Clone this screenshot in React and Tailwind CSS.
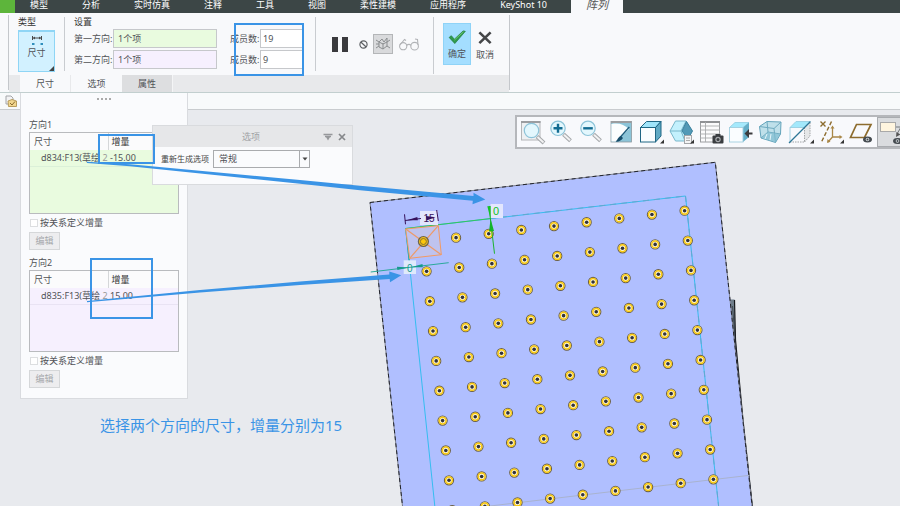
import React from "react";

const MENU = ["模型", "分析", "实时仿真", "注释", "工具", "视图", "柔性建模", "应用程序", "KeyShot 10"];

const COLUMNS = [0, 1, 2, 3, 4, 5, 6, 7, 8];
const ROWS = [0, 1, 2, 3, 4, 5, 6, 7, 8, 9];

function Hole({ x, y }) {
  return (
    <g>
      <circle cx={x} cy={y} r="4.6" fill="#fdf6da" stroke="#6b5f45" strokeWidth="1.1" />
      <circle cx={x} cy={y} r="3.4" fill="none" stroke="#f9c90f" strokeWidth="1.5" />
      <circle cx={x} cy={y} r="1.8" fill="#33343c" />
    </g>
  );
}

function Model() {
  const holes = ROWS.flatMap((row) =>
    COLUMNS.filter((col) => row + col > 0).map((col) => ({
      id: `${row}-${col}`,
      x: 423.4 + col * 32.65 + row * 3.2,
      y: 241.5 - col * 3.85 + row * 29.85,
    }))
  );
  return (
    <svg className="absolute inset-0 h-full w-full" aria-label="阵列预览">
      <polygon points="729,299.5 734.5,299.5 735.5,340 743,420 753,508 750,508" fill="#6f7e8b" />
      <path d="M734.5 300 L735.5 340 L743 420 L752.5 508" stroke="#16181c" strokeWidth="1.2" fill="none" />
      <path d="M732.5 306 L736 350" stroke="#2c333a" strokeWidth="0.7" fill="none" />
      <polygon points="370,202.5 715.3,162.3 752.3,508 402.7,508" fill="#b0bfff" stroke="#7d8190" strokeWidth="1" />
      <polygon points="370,202.5 715.3,162.3 752.3,508 402.7,508" fill="none" stroke="#22242c" strokeWidth="1" strokeDasharray="4 3" />
      <path d="M749.5 475.3 L490 506" stroke="#a9b3cf" strokeWidth="1" />
      <path d="M435 508 L405.7 228.5 L685.5 196 L718.8 508" fill="none" stroke="#35bdf0" strokeWidth="1" />
      <path d="M685.5 196 L718.8 508 M490 218.5 L685.5 196" fill="none" stroke="#63a9cf" strokeWidth="1" strokeDasharray="6 5" />
      <path d="M405.7 228.5 L491 218.5" stroke="#35c45c" strokeWidth="1.2" />
      <path d="M405.7 228.5 L410 268" stroke="#2aa99b" strokeWidth="1.2" />
      <polygon points="405.7,229 438.3,225.7 441.3,254.7 409.7,258.3" fill="#bfc3ee" stroke="#f39a62" strokeWidth="1" />
      <path d="M405.7 229 L441.3 254.7 M438.3 225.7 L409.7 258.3" stroke="#ee9a68" strokeWidth="1.2" />
      <circle cx="423.4" cy="241.5" r="5" fill="#f5c01c" stroke="#6b6350" strokeWidth="1.2" />
      <circle cx="423.4" cy="241.5" r="3" fill="#fcc70c" stroke="#8a742c" strokeWidth="1" />
      {holes.map((h) => (
        <Hole key={h.id} x={h.x} y={h.y} />
      ))}
      <rect x="420" y="211" width="18" height="14" fill="#e3e6fd" />
      <path d="M404.5 214.3 L405.5 224.3 M436.7 210 L438.3 221 M405 220.5 L421 218.5" stroke="#36115c" strokeWidth="1" />
      <polygon points="407,220.3 417.3,217 417.8,220.3" fill="#36115c" />
      <polygon points="435.5,217.3 426,216 426.5,220.5" fill="#36115c" />
      <text x="423.5" y="222" fontSize="10" fill="#36115c" className="font-['Liberation_Sans',sans-serif]">15</text>
      <rect x="490.5" y="204" width="12.5" height="14" fill="#e3e6fd" />
      <path d="M489.5 206 L490.3 218 L494.5 253.7" stroke="#1db32e" strokeWidth="1" fill="none" />
      <polygon points="487.3,206.3 490.7,206 490.3,218.3" fill="#14c225" />
      <polygon points="490.6,219 489,231.5 494,231" fill="#14b42a" />
      <text x="493" y="215" fontSize="11" fill="#14c225" className="font-['Liberation_Sans',sans-serif]">0</text>
      <rect x="403.7" y="260.3" width="12.3" height="13.7" fill="#dfeafb" />
      <path d="M370.7 272 L448.7 262.7" stroke="#2aa99b" strokeWidth="1" />
      <polygon points="397,266.7 397.4,270 408.5,267.4" fill="#169a8c" />
      <polygon points="422.5,264 422.8,267.3 411,267.2" fill="#169a8c" />
      <text x="407" y="271.5" fontSize="10" fill="#169a8c" className="font-['Liberation_Sans',sans-serif]">0</text>
    </svg>
  );
}

function Annotations() {
  return (
    <svg className="pointer-events-none absolute inset-0 h-full w-full" aria-hidden="true">
      <g fill="#3a94e6">
        <polygon points="87,161.7 130,164.3 300,180 360,185.7 473.5,196 473.5,192.8 485.3,199.5 472.5,204.3 472.8,200.8 360,190.2 300,183.8 130,166.3 87,163" />
        <polygon points="87,301 200,290 300,281.5 389.3,274.5 389.3,271.5 401.3,275.3 390,282.3 389.7,279 300,285 200,292.6 87,302.2" />
      </g>
    </svg>
  );
}

function Corner() {
  return <polygon points="27,22.5 27,26.5 23,26.5" fill="#333" />;
}

function Eye({ x, y }) {
  return (
    <g>
      <ellipse cx={x} cy={y} rx="4.5" ry="3" fill="#454b50" />
      <circle cx={x} cy={y} r="1.8" fill="#d5dadd" />
      <circle cx={x} cy={y} r="1" fill="#454b50" />
    </g>
  );
}

function Lens({ cx, cy }) {
  return (
    <g>
      <path d={`M${cx + 5.5} ${cy + 6} L${cx + 12.5} ${cy + 12.5}`} stroke="#a4a7aa" strokeWidth="4" />
      <path d={`M${cx + 6} ${cy + 6.5} L${cx + 12} ${cy + 12}`} stroke="#f2f2f3" strokeWidth="2" />
      <circle cx={cx} cy={cy} r="7.2" fill="#e3f7fd" stroke="#8cc3d8" strokeWidth="1.2" />
    </g>
  );
}

const VIEW_TOOLS = [
  {
    name: "重新调整",
    art: (
      <>
        <rect x="4.5" y="4.5" width="18.5" height="18.5" fill="#eef0f2" stroke="#b4b6b8" />
        <path d="M4 5h19.5" stroke="#9b9da0" strokeWidth="2" />
        <Lens cx={14.5} cy={13.5} />
      </>
    ),
  },
  {
    name: "放大",
    art: (
      <>
        <Lens cx={11} cy={11.3} />
        <path d="M6.5 11.3h9M11 6.8v9" stroke="#136c92" strokeWidth="2.4" />
      </>
    ),
  },
  {
    name: "缩小",
    art: (
      <>
        <Lens cx={11} cy={11.3} />
        <path d="M6.2 11.3h9.6" stroke="#136c92" strokeWidth="2.4" />
      </>
    ),
  },
  {
    name: "重画",
    art: (
      <>
        <rect x="4" y="4.5" width="20.5" height="20.5" fill="#8cc4d8" stroke="#8d9aa0" strokeWidth="0.8" />
        <path d="M4.4 7 C12 5.5 17 7.5 22 12 L9 24.6 L4.4 24.6Z" fill="#fbfdfe" />
        <path d="M4 5h20.5" stroke="#9b9da0" strokeWidth="2" />
        <path d="M22.3 10 L13 20.5" stroke="#1c5b7c" strokeWidth="1.3" />
        <path d="M14 19 L16 21 C14 24 11 25 8.5 24.6 C10.5 23 11 20 14 19Z" fill="#174d6b" />
      </>
    ),
  },
  {
    name: "显示样式",
    art: (
      <>
        <path d="M3.5 10.5 L9.5 4.5 H24 L18.5 10.5Z" fill="#9fe4fa" stroke="#1f6684" />
        <path d="M18.5 10.5 L24 4.5 V19 L18.5 25Z" fill="#5fa9c4" stroke="#1f6684" />
        <rect x="3.5" y="10.5" width="15" height="14.5" fill="#f9fdff" stroke="#1f6684" />
        <Corner />
      </>
    ),
  },
  {
    name: "已保存方向",
    art: (
      <>
        <path d="M3 14 L8.5 4 H19 L24.5 14 L19 24 H8.5Z" fill="#c3f1fd" stroke="#78b7cb" />
        <path d="M3 14 H14 M14 14 L19 4 M14 14 L18 24" stroke="#78b7cb" fill="none" />
        <path d="M19.5 4.5 L25.5 14 L21 22 L15 14Z" fill="#5299b6" stroke="#3a819e" />
        <rect x="17.5" y="18.5" width="7" height="8" fill="#f4f4f5" stroke="#a3a5a8" />
        <path d="M19 21h4M19 23.5h4" stroke="#999" strokeWidth="0.8" />
        <Corner />
      </>
    ),
  },
  {
    name: "视图管理器",
    art: (
      <>
        <rect x="3.5" y="4.5" width="19" height="20.5" fill="#fbfbfc" stroke="#9b9da0" />
        <path d="M3 5h20" stroke="#8f9194" strokeWidth="2" />
        <path d="M3 9h20M3 13h20M3 17h20M3 21h20M8.5 5v20" stroke="#a8aaad" strokeWidth="0.9" />
        <rect x="15.5" y="18.5" width="11" height="8" rx="1" fill="#3a3d40" />
        <rect x="18.5" y="17" width="5" height="2.5" fill="#3a3d40" />
        <circle cx="21" cy="22.5" r="2.7" fill="#a9acaf" />
        <circle cx="21" cy="22.5" r="1.5" fill="#3a3d40" />
      </>
    ),
  },
  {
    name: "外观",
    art: (
      <>
        <path d="M2.5 10.5 L8 5.5 H22 L16 10.5Z" fill="#a5e9fc" stroke="#8fcbe0" strokeWidth="0.8" />
        <path d="M16 10.5 L22 5.5 V20 L16 25Z" fill="#64aec8" />
        <rect x="2.5" y="10.5" width="13.5" height="14.5" fill="#fafdff" stroke="#a2cfdf" strokeWidth="0.9" />
        <path d="M17.5 16.5 L22 12 V15.5 H25.5 V17.5 H22 V21Z" fill="#3a3a3c" />
      </>
    ),
  },
  {
    name: "透视图",
    art: (
      <>
        <path d="M2.5 9.5 L10 4.5 L24 5 L23.5 17 L18.5 25.5 L4 21Z" fill="#bfe0ea" stroke="#64a4bb" />
        <path d="M2.5 9.5 L17 11.5 L24 5 M17 11.5 L18.5 25.5 M10 4.5 L11 15 L4 21 M11 15 L23.5 17" stroke="#6faabf" fill="none" />
        <path d="M11 15 L23 17 L18.5 25 L4.5 21Z" fill="#7fbcd0" opacity="0.7" />
        <path d="M10 17 L8 22 M14 17 L13 23" stroke="#e6f6fb" />
      </>
    ),
  },
  {
    name: "截面",
    art: (
      <>
        <path d="M3 10.5 L9 4.5 H23 L17.5 10.5Z" fill="#a3e8fb" />
        <path d="M3 10.5 H17.5 M3 10.5 V25 M3 10.5 L9 4.5 H23" stroke="#92cadd" strokeWidth="0.8" fill="none" />
        <path d="M17.5 10.5 L23 5 V19 L17.5 25Z" fill="#e5e7e8" />
        <path d="M17.5 10.5 V25 H3 M17.5 25 L23 19 V5" stroke="#a1a4a6" strokeDasharray="1.5 1" fill="none" />
        <path d="M2 26 L23.5 4.5" stroke="#2e7696" strokeWidth="1.2" />
        <Corner />
      </>
    ),
  },
  {
    name: "基准显示过滤器",
    art: (
      <>
        <path d="M3.5 4.5 L8.5 9.5 M8.5 4.5 L3.5 9.5" stroke="#8d6c2e" strokeWidth="1.4" />
        <path d="M14.5 4.5 L4 26" stroke="#8d6c2e" strokeWidth="1.4" strokeDasharray="4 2" />
        <path d="M15.5 11 V20 H24 M15.5 20 L11 25" stroke="#a98747" strokeWidth="1.3" fill="none" />
        <path d="M15.5 8.5 l2 3 h-4z M25.5 20 l-3 -2 v4z M10 26 l0.5 -4 l3 2.8z" fill="#a98747" />
        <Corner />
      </>
    ),
  },
  {
    name: "平面显示",
    art: (
      <>
        <path d="M9.5 7.5 H24 L17.5 20.5 H3.5Z" fill="none" stroke="#8d6c2e" strokeWidth="1.7" />
        <Eye x={20.5} y={22.5} />
      </>
    ),
  },
  {
    name: "注释显示",
    art: (
      <>
        <path d="M17 9 H30 M23 9 L19 16" stroke="#75787b" />
        <path d="M18 19 l0.5 -5 l4 2.5z" fill="#555" />
        <rect x="2.5" y="4.5" width="15" height="9" fill="#fff5df" stroke="#a9a9a9" />
        <Eye x={19.5} y={23} />
      </>
    ),
  },
];

function ViewToolbar() {
  return (
    <div
      role="toolbar"
      aria-label="视图"
      className="absolute top-[115px] right-0 left-[515px] flex overflow-hidden border-y-2 border-l-2 border-[#b5b7bb] bg-[#f8f9fc]"
    >
      {VIEW_TOOLS.map((tool, i) => (
        <button
          key={tool.name}
          type="button"
          aria-label={tool.name}
          className={
            i === VIEW_TOOLS.length - 1
              ? "h-[30px] w-[30px] shrink-0 border border-[#a9acb0] bg-[#dadcdf]"
              : "h-[30px] w-[30px] shrink-0"
          }
        >
          <svg viewBox="0 0 30 30" className="h-[30px] w-[30px]">{tool.art}</svg>
        </button>
      ))}
    </div>
  );
}

function MenuBar() {
  return (
    <nav className="flex h-[13px] bg-[#3c4646] text-white">
      <button type="button" aria-label="文件" className="w-[15px] shrink-0 bg-[#5db53b]" />
      <div className="flex shrink-0 items-start gap-[34px] pr-[24px] pl-[15px]">
        {MENU.map((m) => (
          <button key={m} type="button" className="leading-[9px] whitespace-nowrap">
            {m}
          </button>
        ))}
      </div>
      <button
        type="button"
        className="flex w-[52px] shrink-0 justify-center bg-[#f8f9fb] text-[11px] leading-[9px] text-[#555] italic"
      >
        阵列
      </button>
    </nav>
  );
}

function Divider() {
  return <div className="my-1 w-px shrink-0 bg-[#c9ccd0]" />;
}

function DirectionField({ id, label, value, tint }) {
  return (
    <div className="flex items-center">
      <label htmlFor={id} className="w-[39px] whitespace-nowrap">
        {label}
      </label>
      <input
        id={id}
        defaultValue={value}
        className={`h-[19px] w-[104px] border border-[#c6c8cb] px-[4px] outline-none ${tint}`}
      />
    </div>
  );
}

function CountField({ id, value }) {
  return (
    <div className="flex items-center">
      <label htmlFor={id} className="w-[30px] whitespace-nowrap">
        成员数:
      </label>
      <input id={id} defaultValue={value} className="h-[19px] w-[43px] border border-[#c6c8cb] bg-white px-[2px] outline-none" />
    </div>
  );
}

function RibbonTools() {
  return (
    <div className="flex items-center">
      <button type="button" aria-label="暂停" className="ml-4 flex gap-1">
        <span className="h-[15px] w-[6px] bg-[#3a3a3d]" />
        <span className="h-[15px] w-[6px] bg-[#3a3a3d]" />
      </button>
      <button type="button" aria-label="无预览" className="ml-[11px]">
        <svg viewBox="0 0 10 10" className="h-[9px] w-[9px]">
          <circle cx="5" cy="5" r="4" fill="none" stroke="#5c5f62" strokeWidth="1.3" />
          <path d="M2 2.2 L8 7.8" stroke="#5c5f62" strokeWidth="1.3" />
        </svg>
      </button>
      <button
        type="button"
        aria-label="连接"
        className="ml-[5px] flex h-5 w-5 items-center justify-center border border-[#b4b6b8] bg-[#d9dadc]"
      >
        <svg viewBox="0 0 16 14" className="h-[14px] w-4" fill="none" stroke="#8b8e90" strokeWidth="1">
          <path d="M1 3 L4 5 L7 2 L9 5 L12 1 L12 5 L15 3 M4 5 V10 L8 12 L12 9 V5 M8 6 V12 M4 5 L8 7 L12 5 M1 11 L4 9 M15 11 L12 9 M1 7 H4" />
        </svg>
      </button>
      <button type="button" aria-label="眼镜预览" className="mx-[6px]">
        <svg viewBox="0 0 20 14" className="h-[14px] w-5" fill="none" stroke="#b1b3b6" strokeWidth="1.1">
          <circle cx="4.2" cy="9.2" r="3.6" />
          <circle cx="15.6" cy="9.2" r="3.8" />
          <path d="M7.5 8.5 C9 7 11 7 12 8.5 M1 8 L5.5 2.5 L7 3.5 M19 8 L18.5 2.5 L16 2" />
        </svg>
      </button>
    </div>
  );
}

function Ribbon() {
  return (
    <div className="flex border-b border-[#c2cfcf] bg-[#f8f9fb] pl-2">
      <div className="my-0.5 w-px bg-[#c4c7cb]" />
      <div>
        <div className="flex h-[62px]">
          <section className="px-[9px] pt-[3px]">
            <h2 className="leading-[11px] text-[#333]">类型</h2>
            <button
              type="button"
              className="relative mt-[3px] flex h-[42px] w-[37px] flex-col items-center border border-t-2 border-[#8fd5f5] bg-[#d2f1ff]"
            >
              <svg viewBox="0 0 12 12" className="mt-[3px] h-3 w-3">
                <path d="M1.5 1v4M10.5 1v4M2 3h8" stroke="#4a4a4a" strokeWidth="1" />
                <path d="M2 3l2-1.5v3zM10 3L8 1.500v3z" fill="#4a4a4a" />
                <path d="M1 8h2.500v2H1zM9.500 8H12v2H9.500z" fill="#2f8fbd" />
              </svg>
              <span className="leading-[12px]">尺寸</span>
              <svg viewBox="0 0 5 5" className="absolute right-0 bottom-0 h-[5px] w-[5px]">
                <path d="M5 0V5H0Z" fill="#444" />
              </svg>
            </button>
          </section>
          <Divider />
          <section className="pt-[3px] pr-3 pl-[9px]">
            <h2 className="leading-[11px] text-[#333]">设置</h2>
            <div className="mt-[2px] flex gap-[13px]">
              <div className="flex flex-col gap-[2px]">
                <DirectionField id="dir1" label="第一方向:" value="1个项" tint="bg-[#e9fbdf]" />
                <DirectionField id="dir2" label="第二方向:" value="1个项" tint="bg-[#f6f0fe]" />
              </div>
              <div className="flex flex-col gap-[2px]">
                <CountField id="count1" value="19" />
                <CountField id="count2" value="9" />
              </div>
            </div>
          </section>
          <Divider />
          <RibbonTools />
          <div className="ml-2">
            <div className="mt-1 h-[57px] w-px bg-[#c9ccd0]" />
          </div>
          <div className="flex pt-[10px] pr-[10px] pl-[9px]">
            <button type="button" className="flex h-[42px] w-[28px] flex-col items-center border border-[#8fd3f7] bg-[#a4deff] pt-[6px]">
              <svg viewBox="0 0 20 16" className="h-4 w-5">
                <path d="M1 8.500 L3.500 6.500 L7 10.500 L17 1 L19.500 1.500 L7.500 15.500Z" fill="#2f9a4c" stroke="#1f7a3a" strokeWidth="0.8" />
                <path d="M7 11.500 L17.500 2" stroke="#74cd74" strokeWidth="1" />
              </svg>
              <span className="leading-[20px]">确定</span>
            </button>
            <button type="button" className="flex h-[42px] w-[28px] flex-col items-center pt-[7px]">
              <svg viewBox="0 0 16 16" className="h-4 w-4">
                <path d="M2 2.500 L14 14 M14 2.500 L2 14" stroke="#444648" strokeWidth="2.800" />
              </svg>
              <span className="leading-[20px]">取消</span>
            </button>
          </div>
        </div>
        <div className="flex h-[17px] bg-[#e8e9eb] pl-[11px]">
          <button type="button" className="w-[51px] border-r border-[#e8e9eb] bg-[#f8f9fb]">尺寸</button>
          <button type="button" className="w-[51px] bg-[#f8f9fb]">选项</button>
          <button type="button" className="w-[51px] border-r border-[#f4f5f6] bg-[#dddee0]">属性</button>
        </div>
      </div>
      <div className="my-0.5 w-px bg-[#c4c7cb]" />
    </div>
  );
}

function Direction({ title, name, value, fill, line, checkId }) {
  return (
    <section>
      <h3 className="leading-[14px]">{title}</h3>
      <div className={`h-[82px] border border-[#b9bbbe] ${fill}`}>
        <table className="w-full table-fixed border-collapse text-left">
          <thead>
            <tr className="h-[17px] bg-[#fbfbfc]">
              <th className="w-[78px] border-r border-[#d5d7d9] py-0 pl-1 font-normal">尺寸</th>
              <th className="py-0 pl-[3px] font-normal text-[#333]">增量</th>
            </tr>
          </thead>
          <tbody>
            <tr className={`h-[16px] border-b ${line}`}>
              <td className="py-0 pl-[11px] whitespace-nowrap">
                {name}<span className="text-[#999]"> 2</span>
              </td>
              <td className="py-0 pl-[2px]">{value}</td>
            </tr>
          </tbody>
        </table>
      </div>
      <div className="mt-[3px] flex h-[12px] items-center gap-[2px]">
        <input id={checkId} type="checkbox" className="ml-px h-[8px] w-[8px] appearance-none border border-[#dcdee0] bg-white" />
        <label htmlFor={checkId} className="whitespace-nowrap">按关系定义增量</label>
      </div>
      <button type="button" className="mt-[3px] block h-[18px] w-[31px] border border-[#d5d7d9] bg-[#ededef] text-[#a5a7aa]">
        编辑
      </button>
    </section>
  );
}

function DimensionPanel() {
  return (
    <aside className="absolute top-[93px] left-5 w-[168px] border border-t-0 border-[#d9dbdf] bg-[#fafbfd] px-[8px] pb-[10px]">
      <div className="flex h-[11px] items-center justify-center gap-[2px]">
        <i className="h-[2px] w-[2px] bg-[#aaa]" />
        <i className="h-[2px] w-[2px] bg-[#aaa]" />
        <i className="h-[2px] w-[2px] bg-[#aaa]" />
        <i className="h-[2px] w-[2px] bg-[#aaa]" />
      </div>
      <div className="mt-[14px] flex flex-col gap-[6px]">
        <Direction title="方向1" name="d834:F13(草绘" value="-15.00" fill="bg-[#e9fbdf]" line="border-[#dbf0d8]" checkId="rel1" />
        <Direction title="方向2" name="d835:F13(草绘" value="15.00" fill="bg-[#f6f0fe]" line="border-[#e9e3f3]" checkId="rel2" />
      </div>
    </aside>
  );
}

function OptionsDialog() {
  return (
    <div role="dialog" aria-label="选项" className="absolute top-[125px] left-[152px] w-[201px] border border-[#d9dbde] bg-[#fafbfd]">
      <header className="flex h-[21px] items-center bg-[#e6e7e9] pr-[6px] pl-[26px] text-[#a0a2a5]">
        <h3 className="flex-1 text-center">选项</h3>
        <button type="button" aria-label="固定" className="mr-[5px]">
          <svg viewBox="0 0 10 8" className="h-2 w-[10px]">
            <path d="M0.500 1.500h9M2 3.500h6" stroke="#96989b" strokeWidth="1.300" />
            <path d="M3 4h4L5 7.500z" fill="#96989b" />
          </svg>
        </button>
        <button type="button" aria-label="关闭">
          <svg viewBox="0 0 8 8" className="h-2 w-2">
            <path d="M1 1l6 6M7 1L1 7" stroke="#85878a" strokeWidth="1.700" />
          </svg>
        </button>
      </header>
      <div className="flex items-center pt-[3px] pb-[16px] pl-2">
        <label htmlFor="regen" className="w-[52px] text-[8px] whitespace-nowrap text-[#444]">重新生成选项</label>
        <div className="relative">
          <select id="regen" className="block h-[18px] w-[97px] appearance-none border border-[#a9abae] bg-[#fafbfd] pl-[5px] outline-none">
            <option>常规</option>
          </select>
          <div className="pointer-events-none absolute top-0 right-0 flex h-[18px] w-[11px] items-center justify-center border-l border-[#a9abae]">
            <svg viewBox="0 0 6 4" className="h-1 w-[6px]">
              <path d="M0.500 0.500h5L3 3.500z" fill="#444" />
            </svg>
          </div>
        </div>
      </div>
    </div>
  );
}

export default function App() {
  return (
    <div className="relative min-h-screen w-full overflow-hidden bg-[#e8eaee] font-['Noto_Sans','Noto_Sans_CJK_SC',sans-serif] text-[9px] leading-[12px] text-[#505256]">
      <Model />
      <div className="relative">
        <MenuBar />
        <Ribbon />
        <div className="flex h-[17px] items-center border-b border-[#c9cccf] bg-[#f8fafb] pl-[5px]">
          <svg viewBox="0 0 12 12" className="h-3 w-3">
            <path d="M1 1h5l2 2v6H1z" fill="#f3f3f4" stroke="#a4a6a9" />
            <path d="M3 6 L7 4.500 L11.500 6 V11.500 H3.500Z" fill="#f1d68e" stroke="#a98a45" strokeWidth="0.800" />
            <path d="M5 8l2 2 3-3.500" stroke="#8b6a2c" strokeWidth="1" fill="none" />
          </svg>
        </div>
      </div>
      <ViewToolbar />
      <DimensionPanel />
      <OptionsDialog />
      <Annotations />
      <div className="pointer-events-none absolute top-[23px] left-[234px] h-[53px] w-[70px] border-2 border-[#3a94e6]" />
      <div className="pointer-events-none absolute top-[134px] left-[98px] h-[30px] w-[57px] border-2 border-[#3a94e6]" />
      <div className="pointer-events-none absolute top-[258px] left-[90px] h-[61px] w-[63px] border-2 border-[#3a94e6]" />
      <p className="absolute top-[414px] left-[100px] text-[15px] leading-[22px] whitespace-nowrap text-[#3a94e6]">
        选择两个方向的尺寸，增量分别为15
      </p>
    </div>
  );
}
